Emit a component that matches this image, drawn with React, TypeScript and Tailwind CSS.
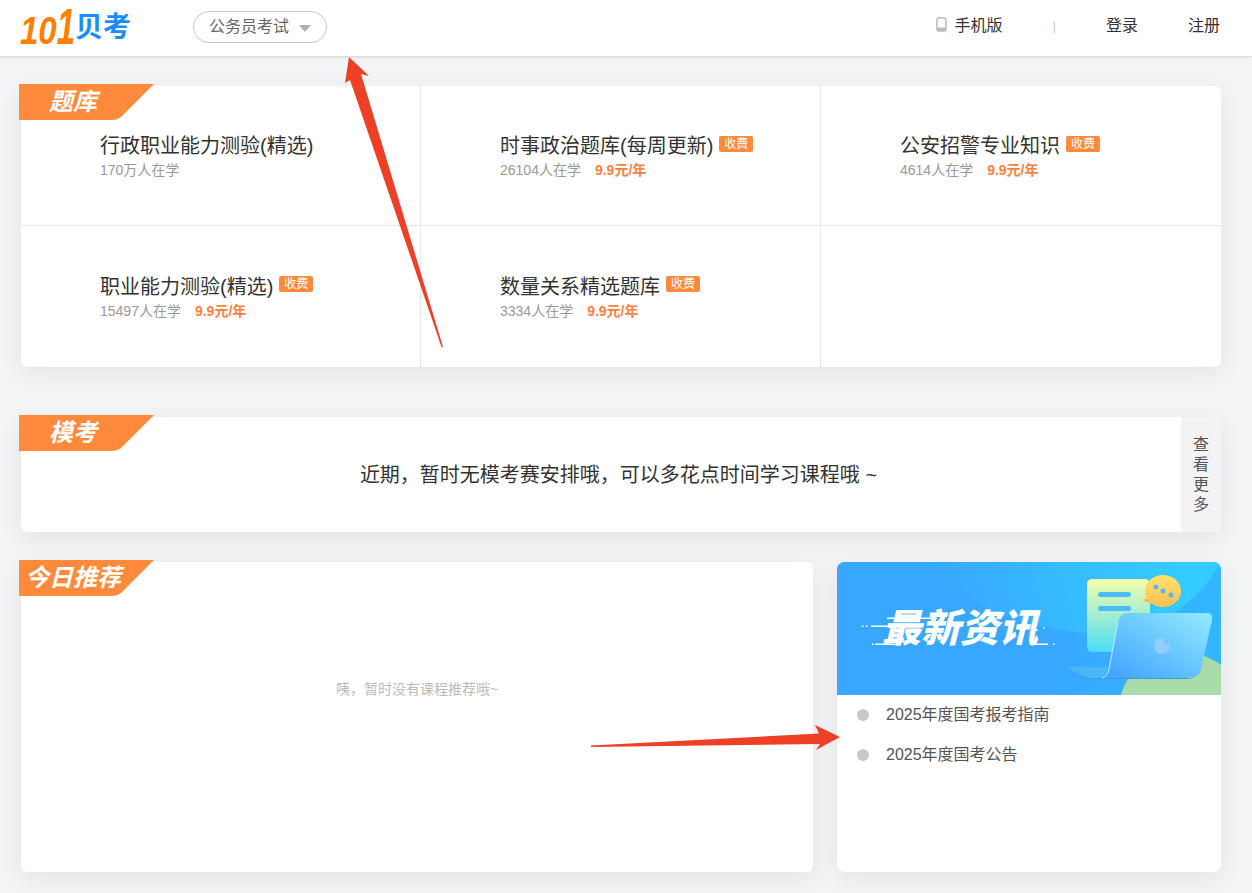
const font = "font-['Liberation_Sans','Noto_Sans_CJK_SC',sans-serif]";

type Bank = { title: string; count: string; price?: string };

const banks: Bank[] = [
  { title: "行政职业能力测验(精选)", count: "170万人在学" },
  { title: "时事政治题库(每周更新)", count: "26104人在学", price: "9.9元/年" },
  { title: "公安招警专业知识", count: "4614人在学", price: "9.9元/年" },
  { title: "职业能力测验(精选)", count: "15497人在学", price: "9.9元/年" },
  { title: "数量关系精选题库", count: "3334人在学", price: "9.9元/年" },
];

const cardShadow = "shadow-[0_6px_24px_rgba(0,0,0,0.07)]";

/* orange corner ribbon on each card */
function Ribbon({ label, indent }: { label: string; indent: string }) {
  return (
    <div className="absolute left-[-2px] top-[-2px] h-[36px] w-[135px]">
      <svg width="135" height="36" viewBox="0 0 135 36" className="block">
        <path d="M0 0H135L103 32Q99 36 92 36H0Z" fill="#ff8a3c" />
      </svg>
      <span className={`absolute top-0 text-[24px] leading-[36px] font-bold italic text-white ${indent}`}>{label}</span>
    </div>
  );
}

function BankCell({ bank, className }: { bank: Bank; className: string }) {
  return (
    <div className={`h-[140px] pl-[79px] pt-[47px] ${className}`}>
      <div className="flex h-[26px] items-center">
        <span className="text-[20px] leading-[26px] text-[#333]">{bank.title}</span>
        {bank.price && (
          <span className="ml-[6px] mt-[-5px] h-[16px] w-[34px] rounded-[2px] bg-[#ff8a3c] text-center text-[12px] leading-[16px] text-white">收费</span>
        )}
      </div>
      <div className="mt-[1px] flex text-[14px] leading-[20px] text-[#999]">
        <span>{bank.count}</span>
        {bank.price && <span className="ml-[14px] font-bold text-[#ff7f3f]">{bank.price}</span>}
      </div>
    </div>
  );
}

function NewsBanner() {
  return (
    <div className="relative h-[133px] overflow-hidden rounded-t-[8px] bg-[#38a7ff]">
      <svg width="384" height="133" viewBox="0 0 384 133" className="block">
        <defs>
          <linearGradient id="base" x1="0" y1="0" x2="1" y2="0">
            <stop offset="0.5" stopColor="#38a7ff" />
            <stop offset="1" stopColor="#33b6ff" />
          </linearGradient>
          <linearGradient id="sky" gradientUnits="userSpaceOnUse" x1="130" y1="60" x2="340" y2="0">
            <stop offset="0" stopColor="#39abff" />
            <stop offset="1" stopColor="#33ccff" />
          </linearGradient>
          <linearGradient id="doc" x1="0" y1="0" x2="0" y2="1">
            <stop offset="0" stopColor="#f6ffaa" />
            <stop offset="1" stopColor="#4cdcf7" />
          </linearGradient>
          <linearGradient id="bubble" x1="0" y1="0" x2="0" y2="1">
            <stop offset="0" stopColor="#ffe270" />
            <stop offset="1" stopColor="#ffc04e" />
          </linearGradient>
          <linearGradient id="screen" x1="1" y1="0" x2="0" y2="1">
            <stop offset="0" stopColor="#93ebff" />
            <stop offset="1" stopColor="#3e9fff" />
          </linearGradient>
        </defs>
        <rect width="384" height="133" fill="url(#base)" />
        <path d="M97 0C125 45 190 68 262 72C320 75 362 38 384 0Z" fill="url(#sky)" />
        <path d="M284 133C290 108 318 86 350 90C365 92 376 97 384 103V133Z" fill="#a8dca8" />
        <rect x="250" y="17" width="63" height="73" rx="5" fill="url(#doc)" />
        <rect x="261" y="30" width="33" height="5" rx="2.5" fill="#4bbcf8" />
        <rect x="261" y="44" width="33" height="5" rx="2.5" fill="#4bbcf8" />
        <path d="M305 38L316 35L320 44Z" fill="#ffb54a" />
        <ellipse cx="326" cy="29" rx="18" ry="16" fill="url(#bubble)" />
        <circle cx="319" cy="25" r="2.5" fill="#55b5f5" />
        <circle cx="326" cy="29" r="2.5" fill="#55b5f5" />
        <circle cx="334" cy="33" r="2.5" fill="#55b5f5" />
        <path d="M230 105H272L265 117H252Q244 114 230 105Z" fill="#4cb5f5" />
        <path d="M232 107Q244 114 252 117H350L356 116H252Q242 113 232 107Z" fill="#3a9ae0" />
        <path d="M291 51H371Q376 51 375 58L364 108Q362 116 352 116H265Q271 114 272 107L281 60Q283 51 291 51Z" fill="url(#screen)" />
        <path d="M265 116Q271 114 272 107L281 60" fill="none" stroke="#b5f3ff" strokeWidth="1" />
        <circle cx="325" cy="84" r="8" fill="#93cdfd" />
        <circle cx="329" cy="80" r="2.5" fill="#7cc0fa" />
        <g fill="#fff">
          <rect x="50" y="55.5" width="50" height="1.5" />
          <rect x="34" y="63.5" width="17" height="1.5" />
          <rect x="25" y="63.5" width="1.5" height="1.5" />
          <rect x="29" y="63.5" width="1.5" height="1.5" />
          <rect x="35" y="81.5" width="1.5" height="1.5" />
          <rect x="38" y="81.5" width="20" height="1.5" />
          <rect x="196" y="67.5" width="5" height="1.5" />
          <rect x="206" y="65.5" width="1.5" height="1.5" />
          <rect x="193" y="81.5" width="18" height="1.5" />
          <rect x="216" y="81.5" width="1.5" height="1.5" />
        </g>
      </svg>
      <span className="absolute left-[45px] top-[45px] text-[39px] leading-[44px] font-black italic text-white">最新资讯</span>
    </div>
  );
}

export default function App() {
  return (
    <div className={`relative min-h-[893px] bg-[#f3f4f6] pb-[21px] ${font}`}>
      {/* Header */}
      <header className="flex h-[57px] items-center justify-between border-b border-[#dcdcdc] bg-white pl-[20px] pr-[32px] shadow-[0_1px_3px_rgba(0,0,0,0.06)]">
        <div className="flex items-center">
          <div className="flex h-[56px] w-[113px] items-end whitespace-nowrap pb-[5px] text-[33px] font-bold italic leading-[36px] text-[#ff7f00]">
            <span className="inline-block origin-[50%_29px] scale-y-[1.2]">10</span>
            <span className="inline-block origin-[50%_29px] scale-y-[1.5]">1</span>
            <span className="mb-[9px] text-[28px] font-bold not-italic leading-[28px] text-[#1a8cff]">贝考</span>
          </div>
          <div className="ml-[60px] mt-[-2px] flex h-[32px] w-[134px] items-center rounded-full border border-[#c8c8c8] pl-[15px] text-[16px] text-[#666]">
            公务员考试
            <span className="ml-[10px] mt-[2px] h-0 w-0 border-x-[6px] border-t-[7px] border-x-transparent border-t-[#b0b0b0]" />
          </div>
        </div>
        <nav className="mt-[-5px] flex items-center text-[16px] text-[#333]">
          <svg width="11" height="15" viewBox="0 0 11 15" className="mt-[-2px]">
            <rect x="1" y="1" width="9" height="13" rx="1.5" fill="none" stroke="#bdbdbd" strokeWidth="1.6" />
            <rect x="1" y="10.5" width="9" height="3.5" fill="#bdbdbd" />
          </svg>
          <span className="ml-[8px]">手机版</span>
          <span className="ml-[50px] text-[13px] text-[#c4c8d0]">|</span>
          <span className="ml-[50px]">登录</span>
          <span className="ml-[50px]">注册</span>
        </nav>
      </header>

      <main className="ml-[21px] w-[1200px]">
        {/* 题库 */}
        <section className={`relative mt-[29px] grid h-[281px] grid-cols-3 rounded-[6px] bg-white ${cardShadow}`}>
          <Ribbon label="题库" indent="left-[30px]" />
          {banks.map((bank, i) => (
            <BankCell
              key={bank.title}
              bank={bank}
              className={`${i < 3 ? "border-b border-[#e3e5f2]" : ""} ${i % 3 !== 2 ? "border-r border-[#e3e5f2]" : ""}`}
            />
          ))}
        </section>

        {/* 模考 */}
        <section className={`relative mt-[50px] flex h-[115px] rounded-[6px] bg-white ${cardShadow}`}>
          <Ribbon label="模考" indent="left-[30px]" />
          <div className="flex flex-1 items-center justify-center pl-[35px] text-[20px] text-[#333]">近期，暂时无模考赛安排哦，可以多花点时间学习课程哦 ~</div>
          <div className="flex w-[40px] items-center justify-center rounded-r-[6px] bg-[#f3f3f3] text-center text-[16px] leading-[20px] text-[#555]">
            <span className="w-[16px]">查看更多</span>
          </div>
        </section>

        <div className="mt-[30px] flex justify-between">
          {/* 今日推荐 */}
          <section className={`relative h-[310px] w-[792px] rounded-[6px] bg-white pt-[118px] text-center text-[14px] leading-[18px] text-[#bbb] ${cardShadow}`}>
            <Ribbon label="今日推荐" indent="left-[6px]" />
            咦，暂时没有课程推荐哦~
          </section>

          {/* 最新资讯 */}
          <section className={`h-[310px] w-[384px] rounded-[8px] bg-white ${cardShadow}`}>
            <NewsBanner />
            <ul className="pl-[20px] text-[16px] text-[#555]">
              {["2025年度国考报考指南", "2025年度国考公告"].map((t) => (
                <li key={t} className="flex h-[40px] items-center">
                  <span className="h-[12px] w-[12px] rounded-full bg-[#c8c8c8]" />
                  <span className="ml-[17px]">{t}</span>
                </li>
              ))}
            </ul>
          </section>
        </div>
      </main>

      {/* red annotation arrows on top of the screenshot */}
      <svg width="1252" height="893" viewBox="0 0 1252 893" className="pointer-events-none absolute left-0 top-0">
        <polygon points="349,57 369,76 361,74 443,347 441.5,347 350,80 345,83" fill="#ee4026" />
        <polygon points="840,737 815,725 819,733.5 591,745.5 591,747 820,744 816,750" fill="#ee4026" />
      </svg>
    </div>
  );
}
